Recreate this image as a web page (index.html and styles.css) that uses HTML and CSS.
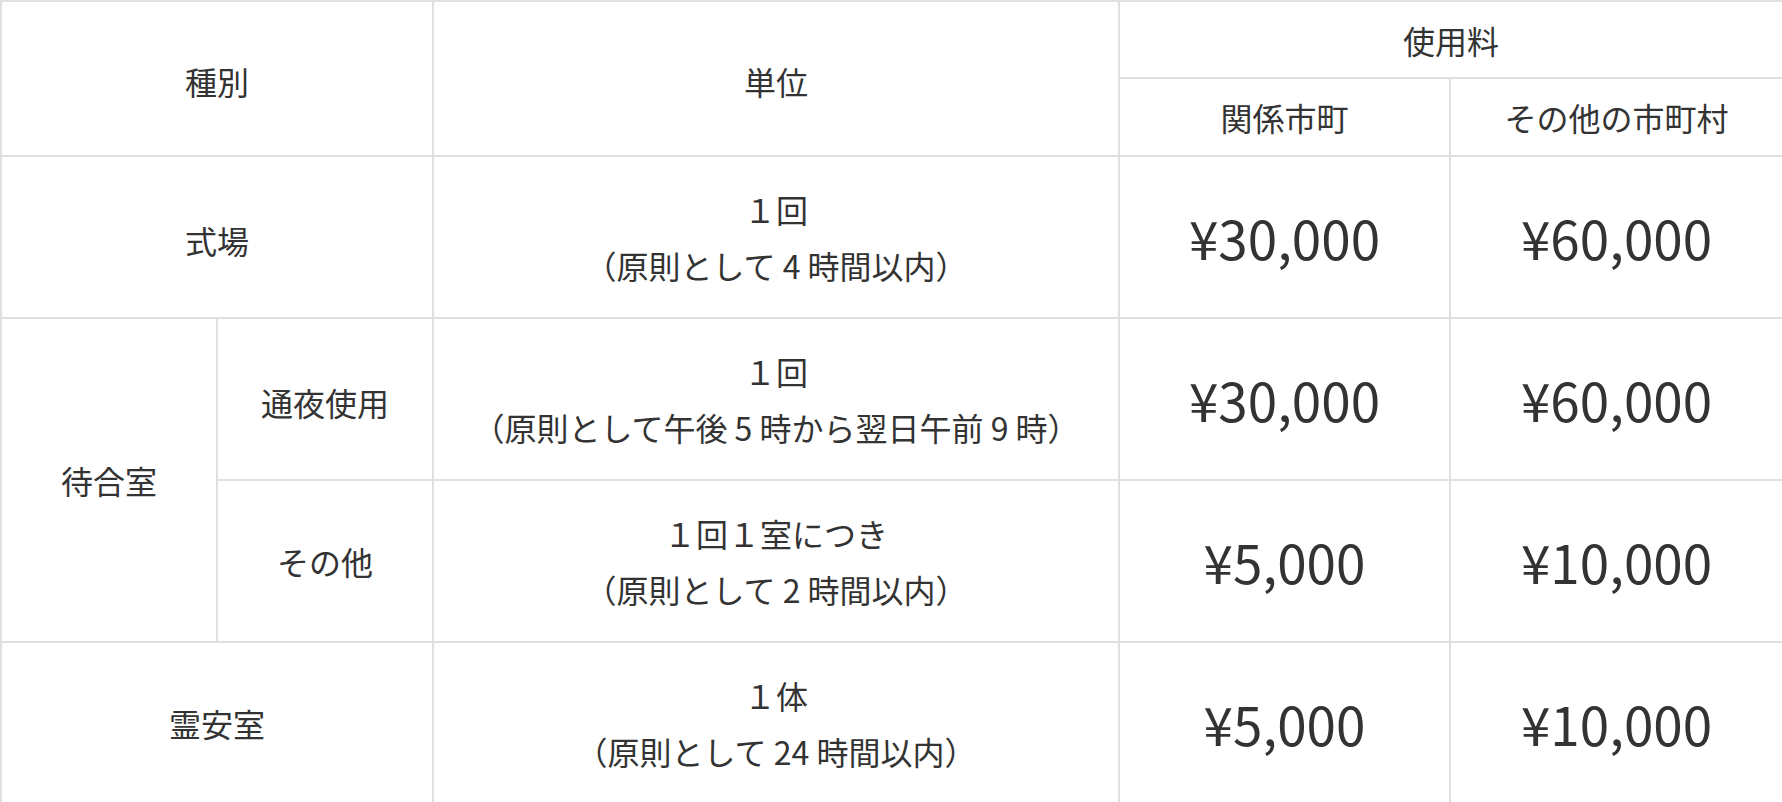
FILE: index.html
```html
<!DOCTYPE html>
<html lang="ja">
<head>
<meta charset="utf-8">
<title>使用料</title>
<link rel="stylesheet" href="styles.css">
</head>
<body>
<table class="fee-table">
  <colgroup>
    <col class="c1"><col class="c2"><col class="c3"><col class="c4"><col class="c5">
  </colgroup>
  <thead>
    <tr class="h1">
      <th rowspan="2" colspan="2">種別</th>
      <th rowspan="2">単位</th>
      <th colspan="2">使用料</th>
    </tr>
    <tr class="h2">
      <th>関係市町</th>
      <th>その他の市町村</th>
    </tr>
  </thead>
  <tbody>
    <tr class="r">
      <td colspan="2" class="label">式場</td>
      <td>１回<br>（原則として 4 時間以内）</td>
      <td class="price">¥30,000</td>
      <td class="price">¥60,000</td>
    </tr>
    <tr class="r">
      <td rowspan="2">待合室</td>
      <td class="label">通夜使用</td>
      <td>１回<br>（原則として午後 5 時から翌日午前 9 時）</td>
      <td class="price">¥30,000</td>
      <td class="price">¥60,000</td>
    </tr>
    <tr class="r">
      <td>その他</td>
      <td>１回１室につき<br>（原則として 2 時間以内）</td>
      <td class="price">¥5,000</td>
      <td class="price">¥10,000</td>
    </tr>
    <tr class="r">
      <td colspan="2">霊安室</td>
      <td>１体<br>（原則として 24 時間以内）</td>
      <td class="price">¥5,000</td>
      <td class="price">¥10,000</td>
    </tr>
  </tbody>
</table>
</body>
</html>
```

FILE: styles.css
```css
html, body {
  margin: 0;
  padding: 0;
  background: #ffffff;
}

.fee-table {
  width: 1782px;
  table-layout: fixed;
  border-collapse: collapse;
  font-family: "Noto Sans CJK JP", "Noto Sans", sans-serif;
  color: #333333;
  font-size: 32px;
  line-height: 1.75;
}

.c1 { width: 216px; }
.c2 { width: 216px; }
.c3 { width: 686px; }
.c4 { width: 331px; }
.c5 { width: 333px; }

.fee-table th,
.fee-table td {
  border: 2px solid #e0e0e0;
  padding: 0;
  text-align: center;
  vertical-align: middle;
  font-weight: 400;
}

.fee-table thead th[rowspan] {
  padding-top: 4px;
}

.fee-table .label {
  padding-top: 6px;
}

.h1 { height: 77px; }
.h2 { height: 78px; }
.r { height: 162px; }

.fee-table .price {
  font-size: 53px;
  line-height: 1;
}
```
